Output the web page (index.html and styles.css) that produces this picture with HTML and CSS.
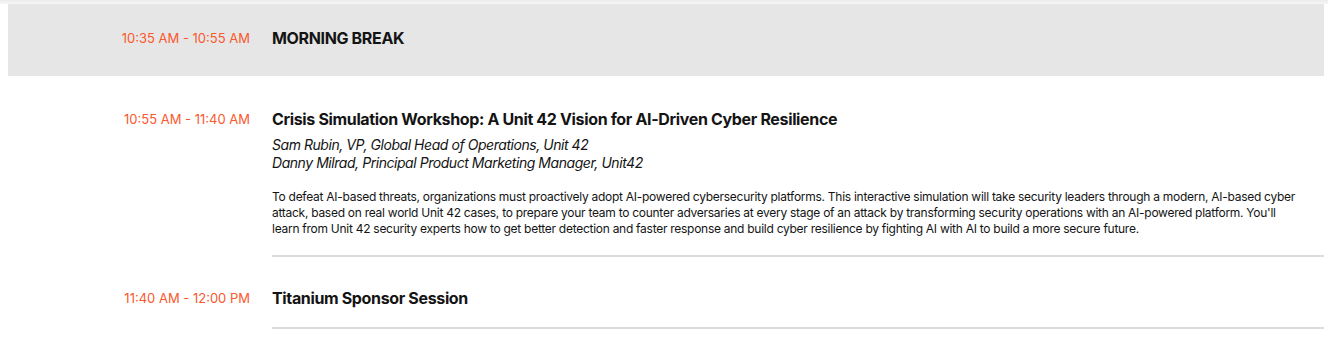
FILE: index.html
```html
<!DOCTYPE html>
<html>
<head>
    <title>Agenda</title>
    <link rel="stylesheet" href="styles.css">
</head>
<body>
    <div class="top-shadow"></div>

    <div class="agenda">
        <!-- Pause -->
        <div class="session break">
            <div class="time">10:35 AM - 10:55 AM</div>
            <div class="content">
                <div class="title">MORNING BREAK</div>
            </div>
        </div>

        <div class="session">
            <div class="time">10:55 AM - 11:40 AM</div>
            <div class="content">
                <div class="title">Crisis Simulation Workshop: A Unit 42 Vision for AI-Driven Cyber Resilience</div>
                <div class="speakers">
                    <p>Sam Rubin, VP, Global Head of Operations, Unit 42</p>
                    <p>Danny Milrad, Principal Product Marketing Manager, Unit42</p>
                </div>
                <p class="description">To defeat AI-based threats, organizations must proactively adopt AI-powered cybersecurity platforms. This interactive simulation will take security leaders through a modern, AI-based cyber attack, based on real world Unit 42 cases, to prepare your team to counter adversaries at every stage of an attack by transforming security operations with an AI-powered platform. You'll learn from Unit 42 security experts how to get better detection and faster response and build cyber resilience by fighting AI with AI to build a more secure future.</p>
            </div>
        </div>

        <div class="session after-divider">
            <div class="time">11:40 AM - 12:00 PM</div>
            <div class="content">
                <div class="title">Titanium Sponsor Session</div>
            </div>
        </div>
    </div>
</body>
</html>
```

FILE: styles.css
```css
body {
    margin: 0;
    font-family: Inter, "Liberation Sans", sans-serif;
    color: #141414;
    background-color: white;
}

.top-shadow {
    height: 4px;
    background: linear-gradient(to bottom, #ececec, #f6f6f6);
}

.agenda {
    width: 1316px;
    margin-left: 8px;
}

.session {
    display: flex;
    gap: 22px;
}

.session .time {
    width: 242px;
    flex-shrink: 0;
    text-align: right;
    color: #fa582d;
    font-size: 13px;
    line-height: 22px;
    padding-top: 32px;
}

.session .content {
    flex: 1;
    padding: 32px 0 18px;
    border-bottom: 2px solid #dcdcdc;
}

.session.after-divider .time,
.session.after-divider .content {
    padding-top: 30px;
}

.session .title {
    font-size: 16px;
    font-weight: 700;
    line-height: 22px;
    letter-spacing: -0.35px;
}

.break {
    background-color: #e6e6e6;
}

.break .time {
    padding-top: 23px;
}

.break .content {
    padding: 23px 0 27px;
    border-bottom: none;
}

.speakers {
    margin-top: 6px;
    font-style: italic;
    font-size: 14px;
    line-height: 18px;
    letter-spacing: -0.45px;
}

.speakers p {
    margin: 0;
}

.description {
    margin: 17px 0 0;
    padding-right: 20px;
    font-size: 12px;
    line-height: 16px;
    letter-spacing: -0.27px;
}
```
